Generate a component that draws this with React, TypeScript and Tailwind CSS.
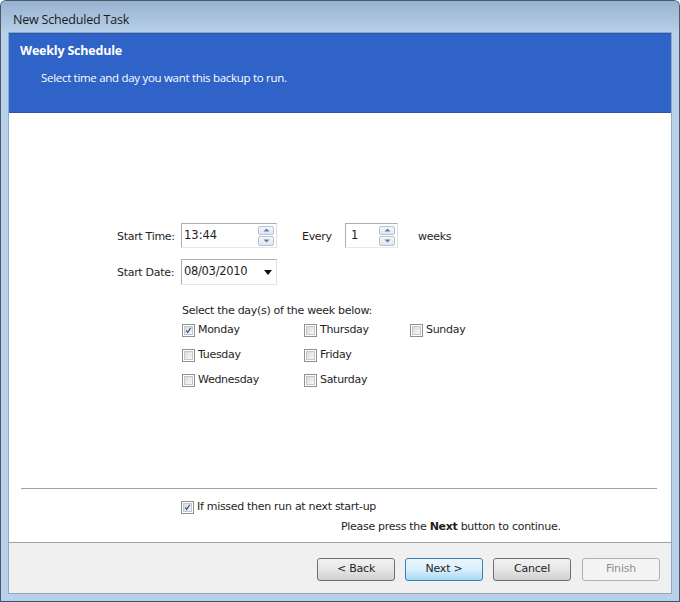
import React from "react";

const font = { fontFamily: "Tahoma, 'DejaVu Sans', sans-serif" };
const uiFont = { fontFamily: "'Open Sans', 'Noto Sans', sans-serif" };

function CheckBox({ checked, label }: { checked?: boolean; label: string }) {
  return (
    <div className="flex items-center h-[25px]">
      <div className="w-[13px] h-[13px] border border-[#8e8f8f] bg-white p-[1px] flex-shrink-0">
        <div className="w-full h-full border border-[#c3c7cb] bg-gradient-to-br from-[#d8dadd] to-[#f8f8f8] flex items-center justify-center">
          {checked && (
            <svg width="9" height="9" viewBox="0 0 9 9">
              <path d="M1.5 4.5 L3.5 7 L7.5 1" stroke="#3b56a0" strokeWidth="1.6" fill="none" />
            </svg>
          )}
        </div>
      </div>
      <span className="ml-[3px] text-[11px] text-[#1e1e1e] tracking-[-0.3px]">{label}</span>
    </div>
  );
}

function Spinner() {
  return (
    <div className="flex flex-col h-[20px] w-[16px] gap-[1px]">
      {["up", "down"].map((d) => (
        <div
          key={d}
          className="flex-1 border border-[#b8c3cf] rounded-[2px] bg-gradient-to-b from-[#f5f7fa] to-[#dfe6ee] flex items-center justify-center"
        >
          <svg width="7" height="4" viewBox="0 0 7 4">
            {d === "up" ? (
              <path d="M0.5 3.5 L3.5 0.5 L6.5 3.5 Z" fill="#5a7cb4" />
            ) : (
              <path d="M0.5 0.5 L3.5 3.5 L6.5 0.5 Z" fill="#5a7cb4" />
            )}
          </svg>
        </div>
      ))}
    </div>
  );
}

function Button({ label, kind }: { label: string; kind?: "default" | "disabled" }) {
  const cls =
    kind === "default"
      ? "border-[#3c7fb1] bg-gradient-to-b from-[#eaf6fd] via-[#d9f0fc] to-[#a7d9f5] text-[#1e1e1e]"
      : kind === "disabled"
      ? "border-[#adb2b5] bg-[#f4f4f4] text-[#8f8f8f]"
      : "border-[#707070] bg-gradient-to-b from-[#f2f2f2] via-[#e6e6e6] to-[#cfcfcf] text-[#1e1e1e]";
  return (
    <div className={`w-[78px] h-[23px] rounded-[3px] border flex items-center justify-center text-[11px] tracking-[-0.2px] ${cls}`}>
      {label}
    </div>
  );
}

export default function App() {
  return (
    <div className="w-[680px] h-[602px] bg-white" style={font}>
      <div className="w-full h-full flex flex-col rounded-t-[6px] border border-[#4a5a6a] border-b-[#2a5a6a] bg-[#b8d0e9] overflow-hidden">
        {/* Title bar */}
        <div className="h-[31px] flex-shrink-0 flex items-start pt-[10px] pl-[12px] bg-gradient-to-b from-[#98b3d1] to-[#b7cfe8]">
          <span className="text-[12.5px] leading-[18px] text-[#1b1b1b] tracking-[-0.2px]" style={uiFont}>
            New Scheduled Task
          </span>
        </div>

        <div className="flex-1 flex flex-col mx-[7px] border border-[#8fa8c4] bg-white">
          {/* Header */}
          <div className="h-[80px] flex-shrink-0 bg-[#3063c8] border-y border-[#2b56b0] pl-[11px] pt-[8px]" style={uiFont}>
            <div className="text-[12.5px] font-bold text-white tracking-[-0.2px]">Weekly Schedule</div>
            <div className="ml-[21px] mt-[8px] text-[11.5px] text-white tracking-[-0.3px]">
              Select time and day you want this backup to run.
            </div>
          </div>

          {/* Content */}
          <div className="flex-1 flex flex-col">
            <div className="pl-[108px] pt-[110px]">
              <div className="flex items-center h-[25px]">
                <span className="w-[64px] mt-[3px] text-[11px] text-[#1e1e1e] tracking-[-0.3px]">Start Time:</span>
                <div className="w-[96px] h-[25px] border border-[#abadb3] border-b-[#e3e9ef] border-r-[#dbdfe6] flex items-center justify-between pl-[2px] pr-[2px]">
                  <span className="text-[11.5px] text-[#1e1e1e]">13:44</span>
                  <Spinner />
                </div>
                <span className="ml-[25px] mt-[3px] w-[43px] text-[11px] text-[#1e1e1e] tracking-[-0.3px]">Every</span>
                <div className="w-[53px] h-[25px] border border-[#abadb3] border-b-[#e3e9ef] border-r-[#dbdfe6] flex items-center justify-between pl-[5px] pr-[2px]">
                  <span className="text-[11.5px] text-[#1e1e1e]">1</span>
                  <Spinner />
                </div>
                <span className="ml-[20px] mt-[3px] text-[11px] text-[#1e1e1e] tracking-[-0.3px]">weeks</span>
              </div>

              <div className="flex items-center h-[26px] mt-[11px]">
                <span className="w-[64px] mt-[3px] text-[11px] text-[#1e1e1e] tracking-[-0.3px]">Start Date:</span>
                <div className="w-[96px] h-[26px] border border-[#abadb3] border-b-[#e3e9ef] border-r-[#dbdfe6] flex items-center justify-between pl-[2px] pr-[4px]">
                  <span className="text-[11.5px] text-[#1e1e1e] tracking-[-0.3px]">08/03/2010</span>
                  <svg width="8" height="5" viewBox="0 0 8 5">
                    <path d="M0 0 L8 0 L4 5 Z" fill="#111" />
                  </svg>
                </div>
              </div>

              <div className="ml-[65px] mt-[18px]">
                <div className="text-[11px] text-[#1e1e1e] tracking-[-0.3px] h-[15px] leading-[15px]">
                  Select the day(s) of the week below:
                </div>
                <div className="grid grid-cols-[122px_106px_100px]">
                  <CheckBox checked label="Monday" />
                  <CheckBox label="Thursday" />
                  <CheckBox label="Sunday" />
                  <CheckBox label="Tuesday" />
                  <CheckBox label="Friday" />
                  <div />
                  <CheckBox label="Wednesday" />
                  <CheckBox label="Saturday" />
                </div>
              </div>
            </div>

            <div className="mt-auto">
              <div className="ml-[12px] mr-[14px] h-[2px] border-t border-[#a0a0a0] border-b border-b-white" />
              <div className="pl-[172px] mt-[5px]">
                <CheckBox checked label="If missed then run at next start-up" />
              </div>
              <div className="pl-[332px] h-[22px] pb-[5px] text-[11px] text-[#1e1e1e] tracking-[-0.3px] leading-[14px]">
                Please press the <span className="font-bold">Next</span> button to continue.
              </div>
            </div>
          </div>

          {/* Buttons */}
          <div className="h-[51px] flex-shrink-0 bg-[#f0f0f0] border-t border-[#a0a0a0] flex items-start justify-end pt-[15px] pr-[11px]">
            <Button label="< Back" />
            <div className="ml-[10px]">
              <Button label="Next >" kind="default" />
            </div>
            <div className="ml-[10px]">
              <Button label="Cancel" />
            </div>
            <div className="ml-[11px]">
              <Button label="Finish" kind="disabled" />
            </div>
          </div>
        </div>
        <div className="h-[7px] flex-shrink-0" />
      </div>
    </div>
  );
}
